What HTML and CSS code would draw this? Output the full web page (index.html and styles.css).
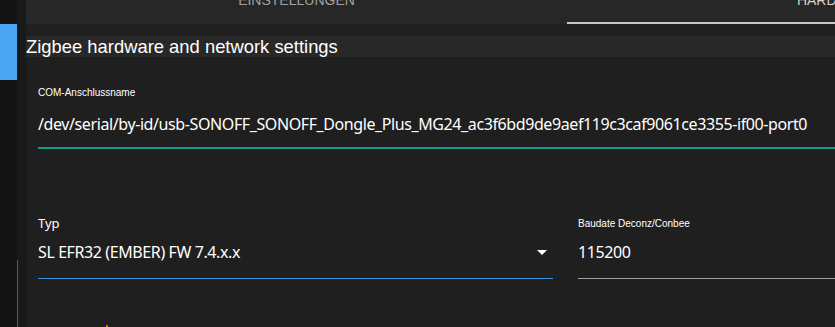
FILE: index.html
```html
<!DOCTYPE html>
<html lang="de">
<head>
    <meta charset="UTF-8">
    <title>Zigbee Einstellungen</title>
    <link rel="stylesheet" href="styles.css">
</head>
<body>
    <div class="app">
        <aside class="rail">
            <div class="rail-item active"></div>
            <div class="rail-track"></div>
        </aside>
        <div class="rail-gutter"></div>
        <main class="page">
            <div class="tabs">
                <div class="tab"><span>Einstellungen</span></div>
                <div class="tab active"><span>Hardware</span></div>
            </div>
            <div class="tabs-shadow"></div>
            <h2 class="section-title">Zigbee hardware and network settings</h2>
            <div class="form">
                <div class="field focused">
                    <label class="field-label small">COM-Anschlussname</label>
                    <div class="field-value">/dev/serial/by-id/usb-SONOFF_SONOFF_Dongle_Plus_MG24_ac3f6bd9de9aef119c3caf9061ce3355-if00-port0</div>
                </div>
                <div class="field-row">
                    <div class="field select">
                        <label class="field-label">Typ</label>
                        <div class="field-value">SL EFR32 (EMBER) FW 7.4.x.x<span class="arrow"></span></div>
                    </div>
                    <div class="field plain">
                        <label class="field-label small">Baudate Deconz/Conbee</label>
                        <div class="field-value">115200</div>
                    </div>
                </div>
                <div class="extra">
                    <svg width="14" height="14" viewBox="0 0 24 24"><path d="M12 2l3 7h7l-5.5 4.5 2 7.5-6.5-4.5-6.5 4.5 2-7.5L2 9h7z" fill="#f0a020"/></svg>
                </div>
            </div>
        </main>
    </div>
</body>
</html>
```

FILE: styles.css
```css
body {
    margin: 0;
    padding: 0;
    background: #1f1f1f;
    overflow: hidden;
    font-family: "Liberation Sans", Arial, sans-serif;
}
.app {
    display: flex;
    height: 327px;
    overflow: hidden;
}
.rail {
    flex: none;
    width: 17px;
    background: #141414;
    border-right: 1px solid #1a1a1a;
    display: flex;
    flex-direction: column;
}
.rail-item {
    margin-top: 24px;
    height: 56px;
}
.rail-item.active {
    background: #4aa6f2;
}
.rail-track {
    flex: 1;
    margin-top: 180px;
    margin-right: -1px;
    border-right: 1px solid #5a5a5a;
}
.rail-gutter {
    flex: none;
    width: 8px;
    background: #191919;
}
.page {
    flex: none;
    width: 1082px;
}
.tabs {
    display: flex;
    height: 24px;
    background: #272727;
    overflow: hidden;
}
.tab {
    flex: 1;
    display: flex;
    justify-content: center;
    align-items: flex-start;
    box-sizing: border-box;
    text-transform: uppercase;
    font-size: 14px;
    color: #a0a0a0;
}
.tab span {
    line-height: 14px;
    margin-top: -7px;
}
.tab.active {
    border-bottom: 2px solid #c8c8c8;
    color: #d0d0d0;
}
.tabs-shadow {
    height: 12px;
    background: #202020;
}
.section-title {
    margin: 0;
    height: 21px;
    line-height: 21px;
    background: #282828;
    color: #fff;
    font-size: 18.4px;
    font-weight: normal;
}
.form {
    padding: 0 12px;
}
.field {
    display: flex;
    flex-direction: column;
}
.field-label {
    color: #fff;
    font-family: "Noto Sans", sans-serif;
    font-size: 13px;
    line-height: 16px;
}
.field-label.small {
    font-family: "Liberation Sans", Arial, sans-serif;
    font-size: 10px;
    line-height: 12px;
}
.field-value {
    position: relative;
    color: #fff;
    font-family: "Noto Sans", sans-serif;
    font-size: 16px;
    letter-spacing: -0.4px;
    line-height: 24px;
    border-bottom: 1px solid #9e9e9e;
}
.focused {
    padding-top: 30px;
}
.focused .field-value {
    margin-top: 13px;
    padding-bottom: 11px;
    border-bottom: 2px solid #159a8b;
    white-space: nowrap;
}
.field-row {
    display: grid;
    grid-template-columns: 515px 1fr;
    gap: 25px;
    margin-top: 66px;
}
.select .field-value {
    margin-top: 9px;
    padding-bottom: 14px;
    border-bottom-color: #3290dc;
}
.plain .field-label {
    margin-top: 3px;
}
.plain .field-value {
    margin-top: 10px;
    padding-bottom: 14px;
}
.arrow {
    position: absolute;
    right: 6px;
    top: 10px;
    border-left: 5px solid transparent;
    border-right: 5px solid transparent;
    border-top: 5px solid #fff;
}
.extra {
    margin-top: 44px;
    padding-left: 62px;
}
```
